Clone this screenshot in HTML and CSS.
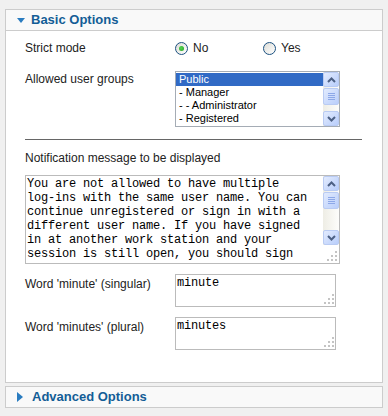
FILE: index.html
```html
<!DOCTYPE html>
<html lang="en">
<head>
    <meta charset="UTF-8">
    <title>Plugin Parameters</title>
    <link rel="stylesheet" href="styles.css">
</head>
<body>

    <!-- Basic Options -->
    <div class="panel">
        <h3 class="panel-title open"><span class="arrow-down"></span>Basic Options</h3>
        <div class="panel-body">

            <div class="row row-radio">
                <label class="key">Strict mode</label>
                <div class="radios">
                    <div class="option"><span class="radio checked"></span>No</div>
                    <div class="option"><span class="radio"></span>Yes</div>
                </div>
            </div>

            <div class="row">
                <label class="key">Allowed user groups</label>
                <div class="listbox">
                    <ul class="list">
                        <li class="selected">Public</li>
                        <li>- Manager</li>
                        <li>- - Administrator</li>
                        <li>- Registered</li>
                    </ul>
                    <div class="scrollbar">
                        <div class="sb-btn"><svg width="9" height="6" viewBox="0 0 9 6"><polyline points="1,5 4.5,1.5 8,5" /></svg></div>
                        <div class="sb-thumb"></div>
                        <div class="sb-track"></div>
                        <div class="sb-btn"><svg width="9" height="6" viewBox="0 0 9 6"><polyline points="1,1 4.5,4.5 8,1" /></svg></div>
                    </div>
                </div>
            </div>

            <div class="sep"></div>

            <label class="key full">Notification message to be displayed</label>
            <div class="memo">
                <div class="memo-text">You are not allowed to have multiple
log-ins with the same user name. You can
continue unregistered or sign in with a
different user name. If you have signed
in at another work station and your
session is still open, you should sign</div>
                <div class="memo-side">
                    <div class="scrollbar">
                        <div class="sb-btn"><svg width="9" height="6" viewBox="0 0 9 6"><polyline points="1,5 4.5,1.5 8,5" /></svg></div>
                        <div class="sb-thumb"></div>
                        <div class="sb-track"></div>
                        <div class="sb-btn"><svg width="9" height="6" viewBox="0 0 9 6"><polyline points="1,1 4.5,4.5 8,1" /></svg></div>
                    </div>
                    <div class="corner">
                        <svg class="grip" width="10" height="10" viewBox="0 0 10 10"><rect x="8" y="0" width="2" height="2"/><rect x="4" y="4" width="2" height="2"/><rect x="8" y="4" width="2" height="2"/><rect x="0" y="8" width="2" height="2"/><rect x="4" y="8" width="2" height="2"/><rect x="8" y="8" width="2" height="2"/></svg>
                    </div>
                </div>
            </div>

            <div class="row row-word">
                <label class="key">Word 'minute' (singular)</label>
                <div class="textbox">
                    <div class="textbox-text">minute</div>
                    <svg class="grip" width="10" height="10" viewBox="0 0 10 10"><rect x="8" y="0" width="2" height="2"/><rect x="4" y="4" width="2" height="2"/><rect x="8" y="4" width="2" height="2"/><rect x="0" y="8" width="2" height="2"/><rect x="4" y="8" width="2" height="2"/><rect x="8" y="8" width="2" height="2"/></svg>
                </div>
            </div>

            <div class="row row-word">
                <label class="key">Word 'minutes' (plural)</label>
                <div class="textbox">
                    <div class="textbox-text">minutes</div>
                    <svg class="grip" width="10" height="10" viewBox="0 0 10 10"><rect x="8" y="0" width="2" height="2"/><rect x="4" y="4" width="2" height="2"/><rect x="8" y="4" width="2" height="2"/><rect x="0" y="8" width="2" height="2"/><rect x="4" y="8" width="2" height="2"/><rect x="8" y="8" width="2" height="2"/></svg>
                </div>
            </div>

        </div>
    </div>

    <!-- Advanced Options -->
    <div class="panel">
        <h3 class="panel-title"><span class="arrow-right"></span>Advanced Options</h3>
    </div>

</body>
</html>
```

FILE: styles.css
```css
/* Global Styles */
body {
    margin: 0;
    padding: 9px 5px 0;
    background: #f0f0f0;
    font-family: "Liberation Sans", Arial, sans-serif;
    font-size: 12px;
    color: #333;
}

/* Sliding panels */
.panel {
    border: 1px solid #ccc;
    background: #fff;
    margin-bottom: 3px;
}

.panel-title {
    margin: 0;
    height: 20px;
    line-height: 20px;
    background: #f9f9f9;
    color: #135d96;
    font-size: 13px;
    font-weight: bold;
    display: flex;
    align-items: center;
}

.panel-title.open {
    border-bottom: 1px solid #ccc;
}

.arrow-down {
    width: 0;
    height: 0;
    margin: 1px 6px 0 11px;
    border-left: 4px solid transparent;
    border-right: 4px solid transparent;
    border-top: 5px solid #2a7cc0;
}

.arrow-right {
    width: 0;
    height: 0;
    margin: 0 9px 0 11px;
    border-top: 5px solid transparent;
    border-bottom: 5px solid transparent;
    border-left: 6px solid #2a7cc0;
}

.panel-body {
    padding: 11px 20px 32px 19px;
}

/* Rows */
.row {
    display: flex;
    align-items: flex-start;
}

.key {
    display: block;
    width: 150px;
    line-height: 14px;
    margin-top: 1px;
    color: #222;
}

.key.full {
    width: auto;
    margin-top: 11px;
}

.row-radio .key {
    line-height: 13px;
    margin-top: 0;
}

.radios {
    display: flex;
    line-height: 13px;
    color: #222;
}

.option {
    width: 88px;
    display: flex;
    align-items: center;
    gap: 5px;
}

.radio {
    box-sizing: border-box;
    width: 13px;
    height: 13px;
    border: 1px solid #1c5180;
    border-radius: 50%;
    background: linear-gradient(135deg, #dcdcd6, #ffffff);
    display: flex;
    align-items: center;
    justify-content: center;
}

.radio.checked::after {
    content: "";
    width: 5px;
    height: 5px;
    border-radius: 50%;
    background: radial-gradient(circle at 40% 40%, #55d551, #21a121);
}

/* Listbox */
.listbox {
    width: 165px;
    height: 56px;
    box-sizing: border-box;
    border: 1px solid #a5acb5;
    display: flex;
    background: #fff;
}

.row-radio + .row {
    margin-top: 16px;
}

.list {
    list-style: none;
    margin: 0;
    padding: 1px 0 0;
    flex: 1;
    font-size: 11px;
    color: #000;
}

.list li {
    height: 13px;
    line-height: 13px;
    padding-left: 3px;
}

.list li.selected {
    background: #316ac5;
    color: #fff;
}

/* XP style scrollbar */
.scrollbar {
    width: 16px;
    display: flex;
    flex-direction: column;
    background: linear-gradient(to right, #eeede5, #fdfdfb);
}

.sb-btn, .sb-thumb {
    box-sizing: border-box;
    width: 16px;
    height: 15px;
    border: 1px solid #b9cbf3;
    border-radius: 2px;
    background: linear-gradient(135deg, #e2ebfe, #b9cefb);
    display: flex;
    align-items: center;
    justify-content: center;
}

.sb-btn polyline {
    fill: none;
    stroke: #4d6185;
    stroke-width: 2;
}

.sb-thumb {
    height: 17px;
    margin-top: 1px;
    background:
        repeating-linear-gradient(to bottom, #8da8e8 0 1px, transparent 1px 2px) center / 7px 7px no-repeat,
        linear-gradient(135deg, #e2ebfe, #b9cefb);
}

.sb-track {
    flex: 1;
}

/* Notification message */
.sep {
    margin-top: 12px;
    height: 1px;
    background: #666;
}

.memo {
    margin-top: 10px;
    width: 315px;
    height: 89px;
    box-sizing: border-box;
    border: 1px solid #bbb;
    display: flex;
    overflow: hidden;
}

.memo-text, .textbox-text {
    flex: 1;
    padding: 1px 1px 0;
    font-family: "Liberation Mono", "Courier New", monospace;
    font-size: 12px;
    letter-spacing: -0.2px;
    line-height: 14px;
    color: #000;
    white-space: pre;
    overflow: hidden;
}

.memo-side {
    display: flex;
    flex-direction: column;
}

.memo-side .scrollbar {
    flex: 1;
}

.corner {
    height: 16px;
    display: flex;
    justify-content: flex-end;
    align-items: flex-end;
    padding: 0 2px 2px 0;
}

.grip rect {
    fill: #c4c4c4;
}

/* Small text boxes */
.row-word {
    margin-top: 10px;
}

.row-word .key {
    margin-top: 3px;
}

.textbox {
    width: 161px;
    height: 33px;
    box-sizing: border-box;
    border: 1px solid #bbb;
    display: flex;
    flex-direction: column;
}

.textbox .grip {
    margin-top: auto;
    align-self: flex-end;
    margin-right: 1px;
    margin-bottom: 2px;
}
```
